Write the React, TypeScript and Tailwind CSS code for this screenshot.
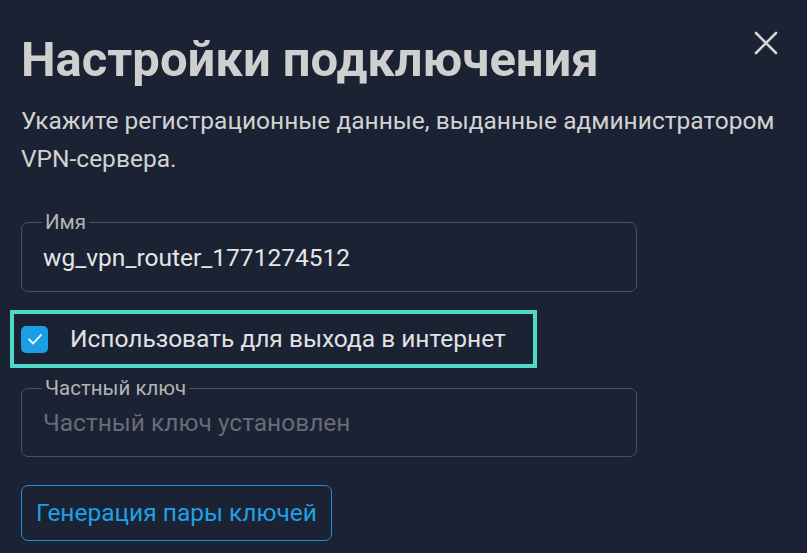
import React from "react";

export default function App() {
  return (
    <div
      className="w-[807px] h-[553px] bg-[#1b2233] overflow-hidden flex flex-col px-[21px]"
      style={{ fontFamily: "Roboto, 'Noto Sans', sans-serif" }}
    >
      <div className="flex justify-between items-start pt-[35px]">
        <h1 className="text-[49px] leading-[49px] font-bold text-[#cfcfcf]">
          Настройки подключения
        </h1>
        <button className="mt-[-4px] mr-[8px] w-[24px] h-[24px] text-[#d6d6d6]" aria-label="Закрыть">
          <svg viewBox="0 0 24 24" width="24" height="24" fill="none" stroke="currentColor" strokeWidth="2.6" strokeLinecap="round">
            <path d="M2 2 22 22M22 2 2 22" />
          </svg>
        </button>
      </div>

      <p className="mt-[18px] text-[24.5px] leading-[38px] text-[#d2d2d2]">
        Укажите регистрационные данные, выданные администратором
        <br />
        VPN-сервера.
      </p>

      <div className="relative mt-[44px] w-[616px] h-[70px] border border-[#4a5163] rounded-[7px] pl-[21px] pt-[21px]">
        <span className="absolute left-[20px] top-[-13px] px-[3px] bg-[#1b2233] text-[20.5px] leading-[24px] text-[#b4b4b4]">
          Имя
        </span>
        <div className="text-[24.5px] leading-[28px] text-[#e6e6e6]">wg_vpn_router_1771274512</div>
      </div>

      <div className="mt-[18px] ml-[-11px] w-[527px] h-[58px] border-4 border-[#4fd8c8] flex items-center pl-[7px]">
        <div className="w-[27px] h-[27px] rounded-[5px] bg-[#1a9ee6] flex items-center justify-center">
          <svg viewBox="0 0 24 24" width="18" height="18" fill="none" stroke="#ffffff" strokeWidth="2.4" strokeLinecap="round" strokeLinejoin="round">
            <path d="M4 12.5 9.5 18 20 6.5" />
          </svg>
        </div>
        <span className="ml-[22px] text-[24.5px] leading-[28px] text-[#e2e2e2]">
          Использовать для выхода в интернет
        </span>
      </div>

      <div className="relative mt-[20px] w-[616px] h-[69px] border border-[#4a5163] rounded-[7px] pl-[21px] pt-[20px]">
        <span className="absolute left-[20px] top-[-13px] px-[3px] bg-[#1b2233] text-[20.5px] leading-[24px] text-[#b4b4b4]">
          Частный ключ
        </span>
        <div className="text-[24.5px] leading-[28px] text-[#666c78]">Частный ключ установлен</div>
      </div>

      <button className="mt-[28px] self-start h-[56px] px-[14px] border border-[#1c8fd3] rounded-[7px] text-[24.5px] leading-[28px] text-[#1fa0e6]">
        Генерация пары ключей
      </button>
    </div>
  );
}
